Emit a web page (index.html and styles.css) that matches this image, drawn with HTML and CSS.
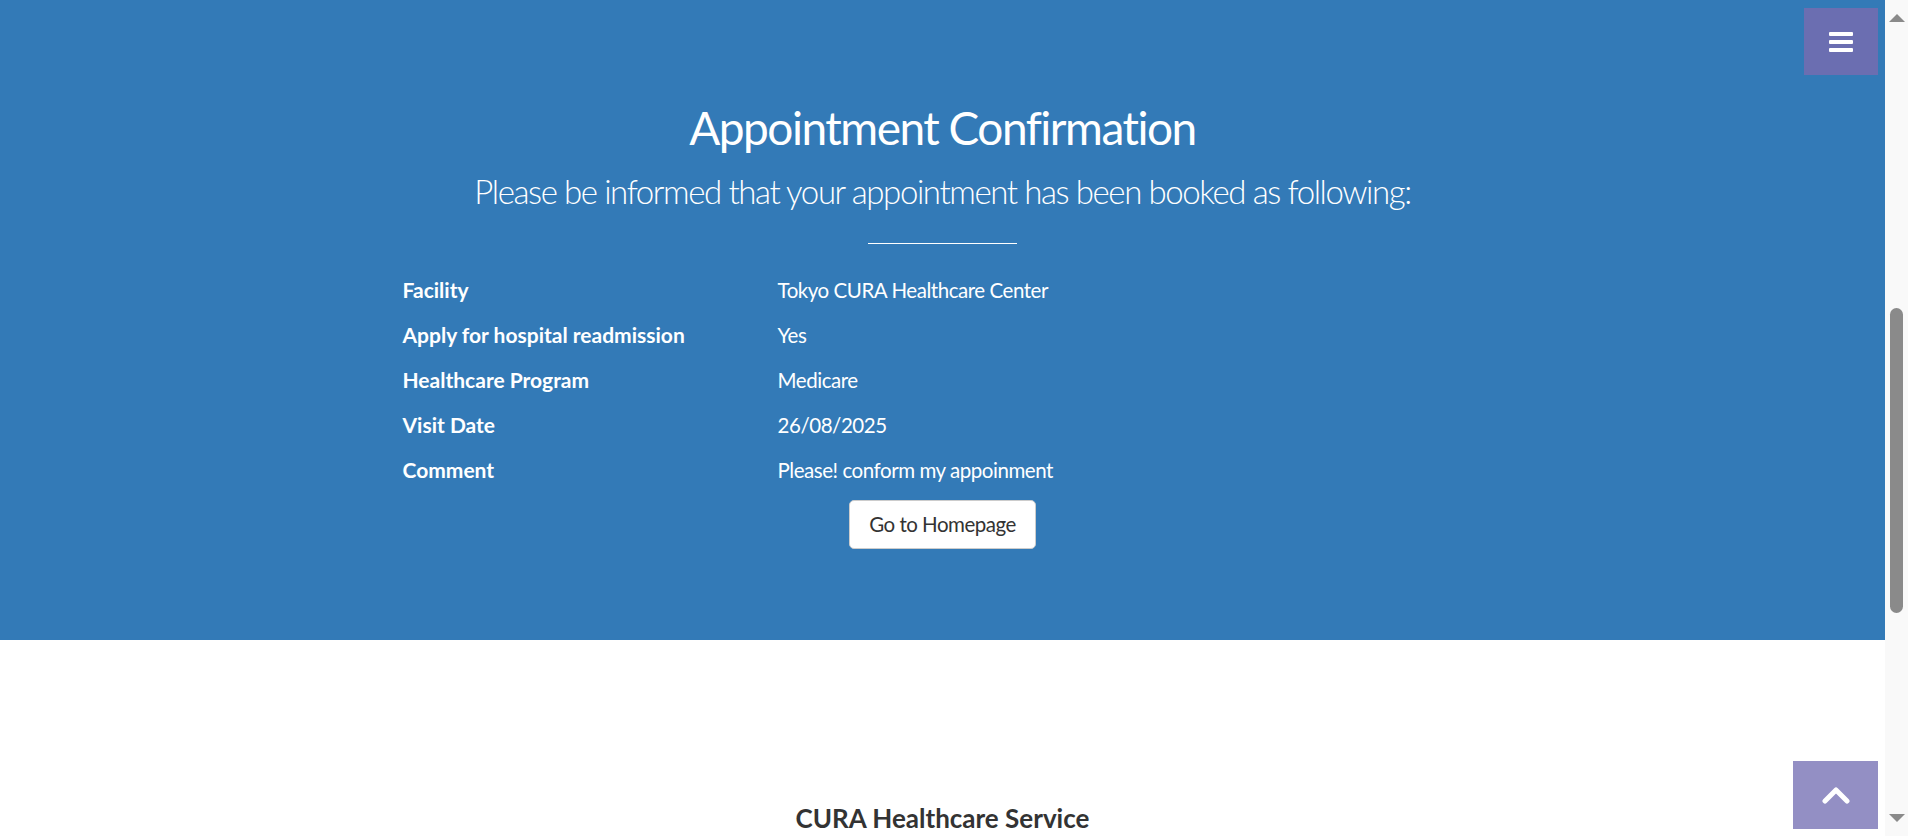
FILE: index.html
```html
<!DOCTYPE html>
<html lang="en">
<head>
<meta charset="utf-8">
<title>CURA Healthcare Service</title>
<link rel="stylesheet" href="styles.css">
</head>
<body>
<div class="window">
  <main class="page">
    <a class="menu-toggle" href="#">
      <svg width="24" height="21" viewBox="0 0 24 21"><rect x="0" y="1" width="24" height="4" rx="1" fill="#fff"/><rect x="0" y="9" width="24" height="4" rx="1" fill="#fff"/><rect x="0" y="17" width="24" height="4" rx="1" fill="#fff"/></svg>
    </a>

    <section class="summary" id="summary">
      <h2 class="summary-title">Appointment Confirmation</h2>
      <p class="summary-lead">Please be informed that your appointment has been booked as following:</p>
      <hr class="rule">
      <div class="details">
        <div class="label">Facility</div><div class="value">Tokyo CURA Healthcare Center</div>
        <div class="label">Apply for hospital readmission</div><div class="value">Yes</div>
        <div class="label">Healthcare Program</div><div class="value">Medicare</div>
        <div class="label">Visit Date</div><div class="value">26/08/2025</div>
        <div class="label">Comment</div><div class="value">Please! conform my appoinment</div>
      </div>
      <div class="actions"><a class="btn" href="#">Go to Homepage</a></div>
    </section>

    <footer class="footer">
      <h4 class="footer-title">CURA Healthcare Service</h4>
    </footer>

    <a class="to-top" href="#">
      <svg width="28" height="18" viewBox="0 0 28 18"><path d="M3 15 L14 4 L25 15" fill="none" stroke="#fff" stroke-width="5" stroke-linecap="round" stroke-linejoin="round"/></svg>
    </a>
  </main>

  <div class="scrollbar">
    <div class="sb-button sb-up"><span class="tri-up"></span></div>
    <div class="sb-track"><div class="sb-thumb"></div></div>
    <div class="sb-button sb-down"><span class="tri-down"></span></div>
  </div>
</div>
</body>
</html>
```

FILE: styles.css
```css
html, body {
  margin: 0;
  padding: 0;
  height: 100%;
  overflow: hidden;
}
body {
  font-family: "Source Sans Pro", Lato, "Noto Sans", sans-serif;
  color: #333;
  background: #fff;
}

.window {
  display: flex;
  height: 836px;
}
.page {
  flex: 1;
  position: relative;
  overflow: hidden;
  height: 836px;
}

/* scrollbar */
.scrollbar {
  width: 23px;
  flex: none;
  background: #f9f9f9;
  display: flex;
  flex-direction: column;
}
.sb-button {
  height: 25px;
  box-sizing: border-box;
  display: flex;
  justify-content: center;
}
.sb-up {
  padding-top: 14px;
}
.sb-down {
  padding-top: 3px;
}
.tri-up, .tri-down {
  width: 0;
  height: 0;
  border-left: 8px solid transparent;
  border-right: 8px solid transparent;
}
.tri-up {
  border-bottom: 8px solid #8a8a8a;
}
.tri-down {
  border-top: 8px solid #8a8a8a;
}
.sb-track {
  flex: 1;
  padding-top: 283px;
}
.sb-thumb {
  height: 305px;
  margin: 0 5px;
  background: #8a8a8a;
  border-radius: 6.5px;
}

/* floating buttons */
.menu-toggle {
  position: absolute;
  top: 8px;
  right: 7px;
  width: 74px;
  height: 67px;
  background: #6b6eb1;
  display: flex;
  align-items: center;
  justify-content: center;
  z-index: 10;
}
.to-top {
  position: absolute;
  right: 7px;
  bottom: 7px;
  width: 85px;
  height: 68px;
  background: #938fc4;
  display: flex;
  align-items: center;
  justify-content: center;
  z-index: 10;
}

/* summary */
.summary {
  background: #337ab7;
  color: #fff;
  height: 640px;
  box-sizing: border-box;
  padding-top: 101px;
  display: flex;
  flex-direction: column;
  align-items: center;
}
.summary-title {
  font-size: 46px;
  font-weight: 400;
  letter-spacing: -1.5px;
  line-height: 54px;
  margin: 0;
}
.summary-lead {
  font-size: 33px;
  font-weight: 300;
  letter-spacing: -1.4px;
  line-height: 40px;
  margin: 16px 0 0;
}
.rule {
  width: 149px;
  border: 0;
  border-top: 1px solid #fff;
  margin: 32px 0 0;
}
.details {
  width: 1080px;
  display: grid;
  grid-template-columns: 375px 1fr;
  grid-auto-rows: 45px;
  align-items: center;
  margin-top: 23px;
  font-size: 21px;
}
.label {
  font-weight: 700;
}
.value {
  font-weight: 400;
  font-size: 20.5px;
  letter-spacing: -0.45px;
}
.actions {
  margin-top: 8px;
}
.btn {
  display: inline-block;
  text-decoration: none;
  font-size: 20.5px;
  letter-spacing: -0.5px;
  line-height: 29px;
  padding: 9px 19px;
  border-radius: 5px;
  border: 1px solid #ccc;
  background: #fff;
  color: #333;
}

/* footer */
.footer {
  padding-top: 164px;
  text-align: center;
}
.footer-title {
  font-size: 26px;
  font-weight: 700;
  line-height: 29px;
  margin: 0;
}
```
